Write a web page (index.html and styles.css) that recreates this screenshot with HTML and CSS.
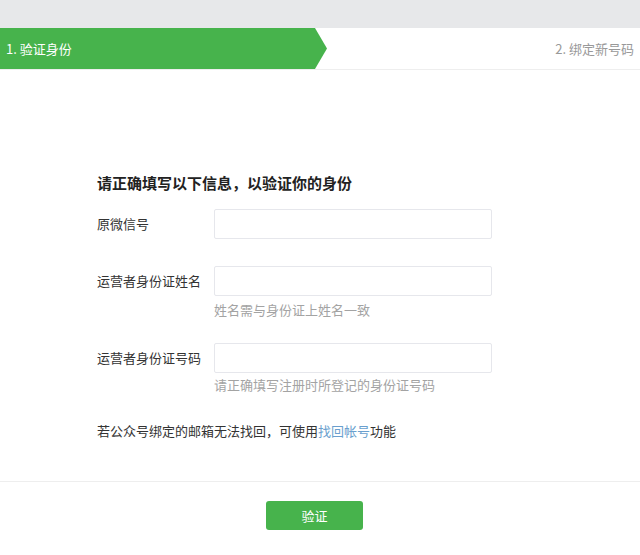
FILE: index.html
```html
<!DOCTYPE html>
<html lang="zh-CN">
<head>
<meta charset="utf-8">
<title>验证身份</title>
<link rel="stylesheet" href="styles.css">
</head>
<body>
<div class="topband"></div>
<div class="steps">
  <div class="step step-active">1. 验证身份</div>
  <div class="step step-next">2. 绑定新号码</div>
</div>
<div class="main">
  <h2 class="title">请正确填写以下信息，以验证你的身份</h2>
  <div class="form">
    <div class="row row-first">
      <label class="label">原微信号</label>
      <input class="input" type="text">
    </div>
    <div class="row row-second">
      <label class="label">运营者身份证姓名</label>
      <input class="input" type="text">
    </div>
    <div class="hint hint-first">姓名需与身份证上姓名一致</div>
    <div class="row row-third">
      <label class="label">运营者身份证号码</label>
      <input class="input" type="text">
    </div>
    <div class="hint hint-second">请正确填写注册时所登记的身份证号码</div>
  </div>
  <p class="tip">若公众号绑定的邮箱无法找回，可使用<a class="link" href="#">找回帐号</a>功能</p>
</div>
<div class="footer">
  <button class="btn" type="button">验证</button>
</div>
</body>
</html>
```
FILE: styles.css
```css
html, body {
  margin: 0;
  padding: 0;
  background: #ffffff;
  font-family: "Noto Sans CJK SC", "Noto Sans", "Liberation Sans", sans-serif;
  color: #333333;
}
.topband {
  height: 28px;
  background: #e7e8ea;
}
.steps {
  height: 41px;
  border-bottom: 1px solid #eeeeee;
  display: flex;
  align-items: stretch;
  justify-content: space-between;
  background: #ffffff;
}
.step {
  display: flex;
  align-items: center;
  font-size: 13px;
}
.step-active {
  width: 321px;
  padding-left: 6px;
  background: #47b34c;
  color: #ffffff;
  clip-path: polygon(0 0, 315px 0, 327px 50%, 315px 100%, 0 100%);
}
.step-next {
  color: #999999;
  padding-right: 6px;
}
.main {
  padding-left: 97px;
}
.title {
  margin: 103px 0 0 0;
  font-size: 15px;
  line-height: 20px;
  font-weight: bold;
  color: #222222;
}
.form {
  display: flex;
  flex-direction: column;
}
.row {
  display: grid;
  grid-template-columns: 117px 278px;
  align-items: center;
}
.row-first { margin-top: 16px; }
.row-second { margin-top: 27px; }
.row-third { margin-top: 24px; }
.label {
  font-size: 13px;
  line-height: 18px;
  color: #333333;
}
.input {
  box-sizing: border-box;
  height: 30px;
  width: 278px;
  margin: 0;
  border: 1px solid #e6e7ec;
  border-radius: 2px;
  background: #ffffff;
  outline: none;
}
.hint {
  margin-left: 117px;
  font-size: 13px;
  line-height: 18px;
  color: #a3a3a3;
}
.hint-first { margin-top: 5px; }
.hint-second { margin-top: 3px; }
.tip {
  margin: 28px 0 0 0;
  font-size: 13px;
  line-height: 18px;
  color: #333333;
}
.link {
  color: #6a9fce;
  text-decoration: none;
}
.footer {
  margin-top: 41px;
  border-top: 1px solid #eeeeee;
  padding-top: 19px;
  padding-left: 266px;
}
.btn {
  display: block;
  width: 97px;
  height: 29px;
  border: none;
  border-radius: 3px;
  background: #47b34c;
  color: #ffffff;
  font-family: "Noto Sans CJK SC", "Noto Sans", sans-serif;
  font-size: 13px;
  padding: 0;
}
```
